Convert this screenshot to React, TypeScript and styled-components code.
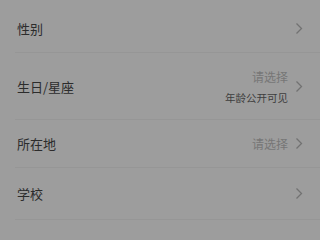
import React from 'react';
import styled, { createGlobalStyle } from 'styled-components';

const GlobalStyle = createGlobalStyle`
	html, body {
		margin: 0;
		padding: 0;
		background: #9d9d9d;
	}
	body {
		font-family: "Noto Sans CJK SC", "Noto Sans", sans-serif;
	}
`;

const List = styled.div`
	width: 320px;
	height: 240px;
	padding-top: 4px;
	box-sizing: border-box;
	overflow: hidden;
	background: #9d9d9d;
`;

const Row = styled.div<{ h: number }>`
	display: flex;
	align-items: center;
	justify-content: space-between;
	height: ${(props) => props.h}px;
	margin-left: 15px;
	padding: 0 17px 0 2px;
	border-bottom: 1px solid #969696;
	box-sizing: border-box;
`;

const Label = styled.span`
	font-size: 13px;
	color: #2c2c2c;
`;

const Right = styled.div`
	display: flex;
	align-items: center;
	gap: 7px;
`;

const Values = styled.div`
	display: flex;
	flex-direction: column;
	align-items: flex-end;
	gap: 5px;
`;

const Hint = styled.span`
	font-size: 12px;
	color: #767676;
`;

const Note = styled.span`
	font-size: 10.5px;
	color: #3e3e3e;
`;

const Chevron = () => (
	<svg width="8" height="13" viewBox="0 0 8 13">
		<path d="M1.5 1.5 L6.5 6.5 L1.5 11.5" fill="none" stroke="#727272" strokeWidth="1.3" />
	</svg>
);

type Item = { label: string; h: number; hint?: string; note?: string };

const items: Item[] = [
	{ label: '性别', h: 49 },
	{ label: '生日/星座', h: 67, hint: '请选择', note: '年龄公开可见' },
	{ label: '所在地', h: 48, hint: '请选择' },
	{ label: '学校', h: 52 },
];

const App: React.FC = () => (
	<List>
		<GlobalStyle />
		{items.map((item) => (
			<Row key={item.label} h={item.h}>
				<Label>{item.label}</Label>
				<Right>
					{item.hint && (
						<Values>
							<Hint>{item.hint}</Hint>
							{item.note && <Note>{item.note}</Note>}
						</Values>
					)}
					<Chevron />
				</Right>
			</Row>
		))}
	</List>
);

export default App;
